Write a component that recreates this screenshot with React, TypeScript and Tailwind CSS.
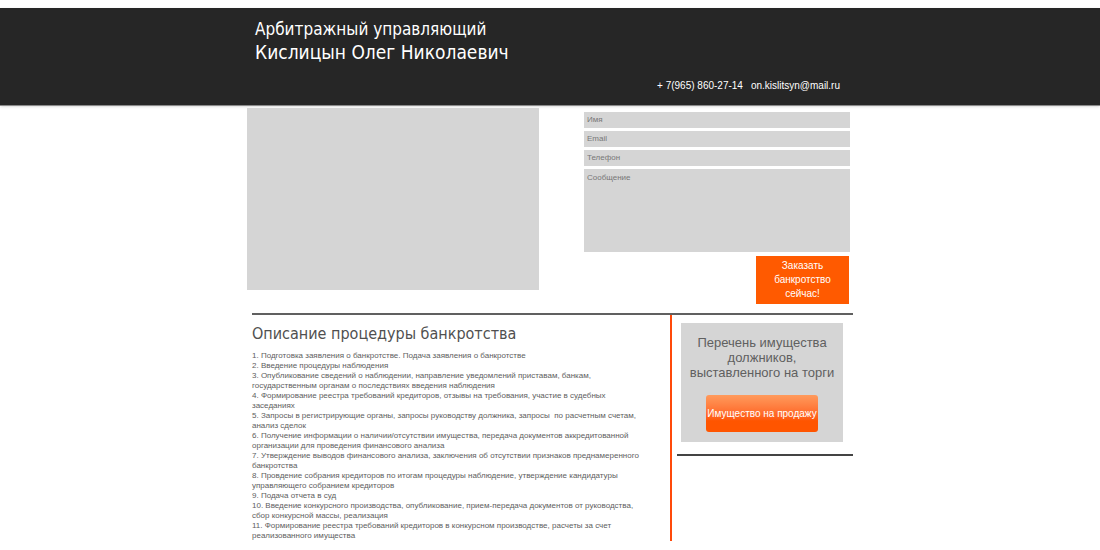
import type { ReactNode } from 'react'

const STEPS = [
  'Подготовка заявления о банкротстве. Подача заявления о банкротстве',
  'Введение процедуры наблюдения',
  'Опубликование сведений о наблюдении, направление уведомлений приставам, банкам, государственным органам о последствиях введения наблюдения',
  'Формирование реестра требований кредиторов, отзывы на требования, участие в судебных заседаниях',
  'Запросы в регистрирующие органы, запросы руководству должника, запросы \u00a0по расчетным счетам, анализ сделок',
  'Получение информации о наличии/отсутствии имущества, передача документов аккредитованной организации для проведения финансового анализа',
  'Утверждение выводов финансового анализа, заключения об отсутствии признаков преднамеренного банкротства',
  'Провдение собрания кредиторов по итогам процедуры наблюдение, утверждение кандидатуры управляющего собранием кредиторов',
  'Подача отчета в суд',
  'Введение конкурсного производства, опубликование, прием-передача документов от руководства, сбор конкурсной массы, реализация',
  'Формирование реестра требований кредиторов в конкурсном производстве, расчеты за счет реализованного имущества',
]

const FIELDS = [
  { name: 'name', type: 'text', label: 'Имя' },
  { name: 'email', type: 'email', label: 'Email' },
  { name: 'phone', type: 'tel', label: 'Телефон' },
]

const fieldClass =
  'block w-full bg-[#d5d5d5] px-[3px] text-[8px] leading-4 text-gray-700 placeholder:text-[#777777] outline-none'

const Container = ({ children }: { children: ReactNode }) => (
  <div className="mx-auto w-full max-w-[606px]">{children}</div>
)

function Header() {
  return (
    <header className="mt-2 border-b border-[#8a8a8a] bg-[#262626] text-white shadow-sm">
      <Container>
        <div className="px-2 pt-[10px] pb-[11px]">
          <h1 className="font-['DejaVu_Sans_Condensed',Tahoma,sans-serif]">
            <span className="block text-[17px] leading-[23px]">Арбитражный управляющий</span>
            <span className="block text-[19px] leading-[23px]">Кислицын Олег Николаевич</span>
          </h1>
          <div className="mt-[14px] flex justify-end gap-2 pr-[5px] text-[10px] leading-4">
            <a href="tel:+79658602714">+ 7(965) 860-27-14</a>
            <a href="mailto:on.kislitsyn@mail.ru">on.kislitsyn@mail.ru</a>
          </div>
        </div>
      </Container>
    </header>
  )
}

function OrderForm() {
  return (
    <form className="flex w-[266px] flex-col gap-[3px] pt-1" onSubmit={(e) => e.preventDefault()}>
      {FIELDS.map((f) => (
        <input
          key={f.name}
          name={f.name}
          type={f.type}
          aria-label={f.label}
          placeholder={f.label}
          className={`${fieldClass} h-4`}
        />
      ))}
      <textarea
        name="message"
        aria-label="Сообщение"
        placeholder="Сообщение"
        className={`${fieldClass} h-[83px] resize-none pt-px`}
      />
      <button
        type="submit"
        className="mt-px mr-px w-[93px] self-end bg-[#ff5a00] px-3 py-[3px] text-[10px] leading-[14px] text-white"
      >
        Заказать банкротство сейчас!
      </button>
    </form>
  )
}

export default function App() {
  return (
    <div className="overflow-x-hidden bg-white font-['Liberation_Sans',Arial,sans-serif] text-[#606060]">
      <Header />
      <Container>
        <main className="pt-[2px]">
          <div className="flex items-start justify-between pr-[3px]">
            <div className="h-[182px] w-[292px] bg-[#d5d5d5]" />
            <OrderForm />
          </div>

          <div className="mt-[9px] ml-[5px] border-t-2 border-[#606060]">
            <div className="flex items-start">
              <section className="flex-1 border-r-2 border-[#ff4a0a] pr-5">
                <h2 className="pt-2 font-['DejaVu_Sans_Condensed',Tahoma,sans-serif] text-[16px] leading-[22px] text-[#505050]">
                  Описание процедуры банкротства
                </h2>
                <ol className="mt-[6px] text-[8px] leading-[10px]">
                  {STEPS.map((step, i) => (
                    <li key={step}>{`${i + 1}. ${step}`}</li>
                  ))}
                </ol>
              </section>

              <aside className="w-[181px] pl-[5px]">
                <div className="mx-1 mr-[10px] mt-2 flex flex-col items-center bg-[#d5d5d5] px-2 pt-3 pb-[10px] text-center">
                  <p className="text-[13px] leading-[15px]">Перечень имущества должников, выставленного на торги</p>
                  <button
                    type="button"
                    className="mt-[15px] h-[37px] w-28 rounded-[3px] bg-linear-to-b from-[#ff9a5c] to-[#ff5500] to-70% text-[10px] whitespace-nowrap text-white"
                  >
                    Имущество на продажу
                  </button>
                </div>
                <hr className="mt-3 border-t-2 border-[#444444]" />
              </aside>
            </div>
          </div>
        </main>
      </Container>
    </div>
  )
}
